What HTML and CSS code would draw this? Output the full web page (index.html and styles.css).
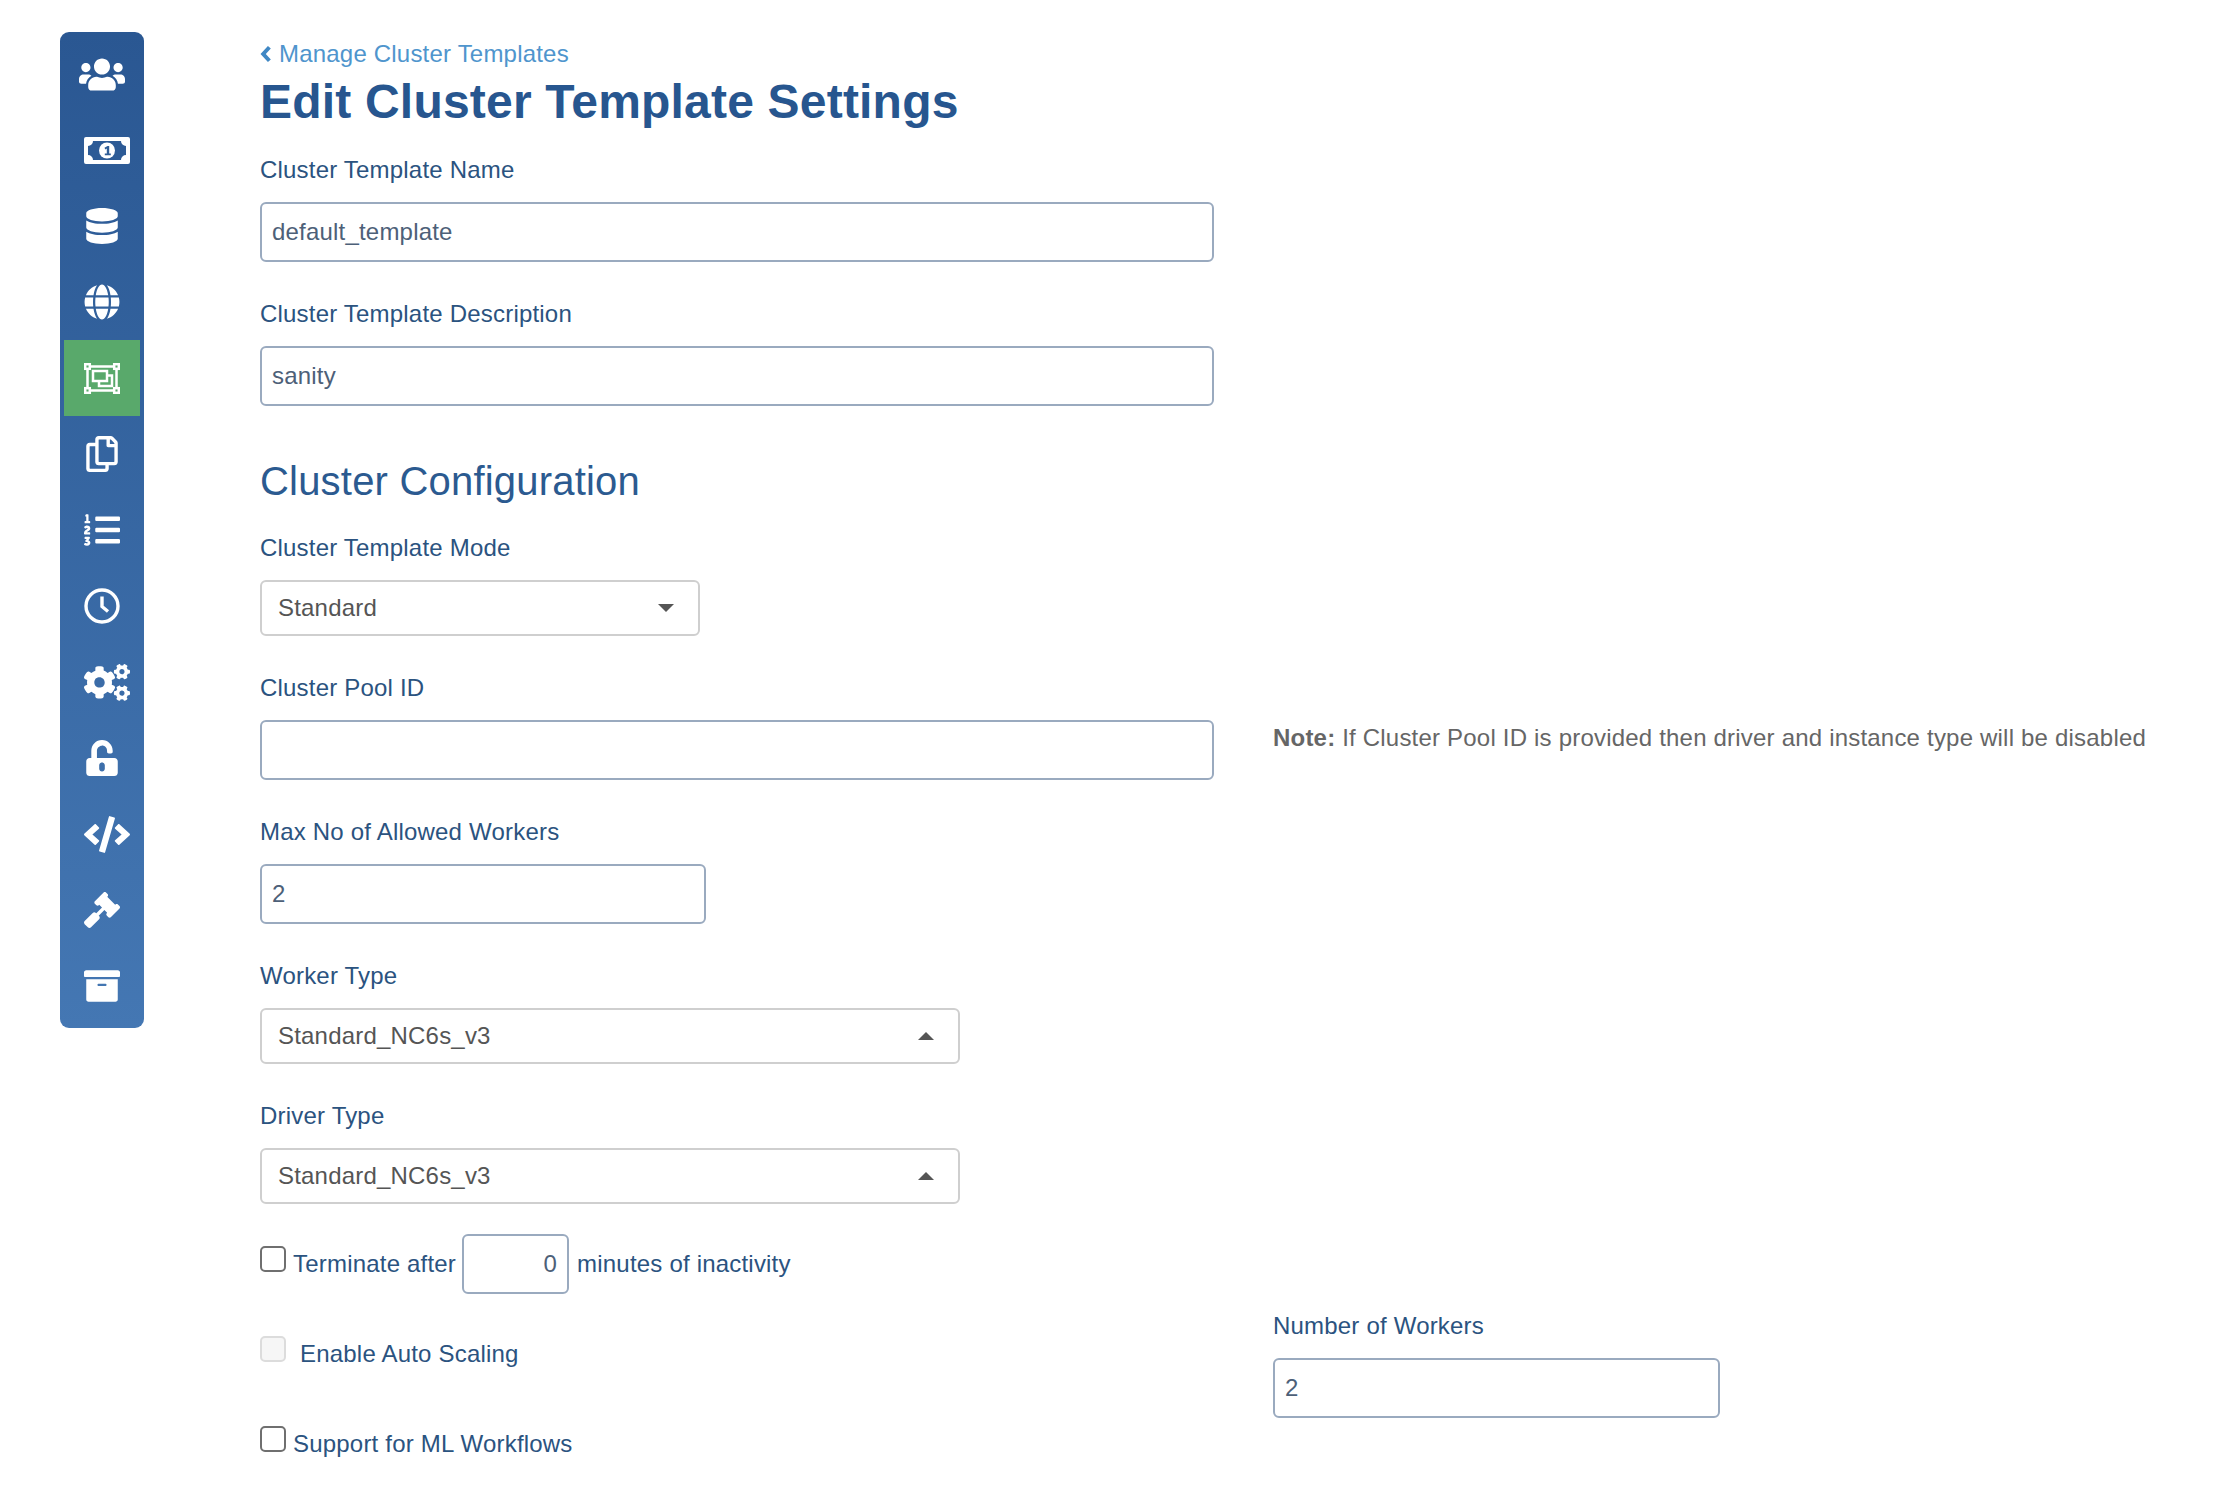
FILE: index.html
```html
<!DOCTYPE html>
<html lang="en">
<head>
<meta charset="utf-8">
<title>Edit Cluster Template Settings</title>
<link rel="stylesheet" href="styles.css">
</head>
<body>
<div class="app">
  <nav class="sidebar">
    <a class="nav-item"><svg class="ico-users" viewBox="0 0 640 512"><path d="M96 224c35.300 0 64-28.700 64-64s-28.700-64-64-64-64 28.700-64 64 28.700 64 64 64zm448 0c35.300 0 64-28.700 64-64s-28.700-64-64-64-64 28.700-64 64 28.700 64 64 64zm32 32h-64c-17.600 0-33.500 7.100-45.100 18.600 40.300 22.100 68.900 62 75.100 109.400h66c17.700 0 32-14.300 32-32v-32c0-35.300-28.700-64-64-64zm-256 0c61.900 0 112-50.100 112-112S381.900 32 320 32 208 82.100 208 144s50.100 112 112 112zm76.800 32h-8.300c-20.800 10-43.900 16-68.500 16s-47.600-6-68.500-16h-8.300C179.600 288 128 339.600 128 403.200V432c0 26.500 21.500 48 48 48h288c26.500 0 48-21.500 48-48v-28.800c0-63.600-51.600-115.200-115.200-115.200zm-223.700-13.400C161.500 263.100 145.600 256 128 256H64c-35.300 0-64 28.700-64 64v32c0 17.700 14.300 32 32 32h65.900c6.300-47.400 34.900-87.300 75.200-109.400z"/></svg></a>
    <a class="nav-item"><svg class="ico-bill" viewBox="0 0 46 27"><path fill-rule="evenodd" d="M2 0h42a2 2 0 0 1 2 2v23a2 2 0 0 1-2 2H2a2 2 0 0 1-2-2V2a2 2 0 0 1 2-2zM9 4a5 5 0 0 1-5 5v9a5 5 0 0 1 5 5h28a5 5 0 0 1 5-5V9a5 5 0 0 1-5-5z"/><circle cx="23" cy="13.500" r="8"/><path class="bill-one" d="M20.500 10.800l3-1.800h1.700v7.500h1.600v1.800h-6v-1.800h2V11.500l-1.500.9z"/></svg></a>
    <a class="nav-item"><svg class="ico-s" viewBox="0 0 448 512"><path d="M448 73.143v45.714C448 159.143 347.667 192 224 192S0 159.143 0 118.857V73.143C0 32.857 100.333 0 224 0s224 32.857 224 73.143zM448 176v102.857C448 319.143 347.667 352 224 352S0 319.143 0 278.857V176c48.125 33.143 136.208 48.572 224 48.572S399.874 209.143 448 176zm0 160v102.857C448 479.143 347.667 512 224 512S0 479.143 0 438.857V336c48.125 33.143 136.208 48.572 224 48.572S399.874 369.143 448 336z"/></svg></a>
    <a class="nav-item"><svg class="ico-m" viewBox="0 0 496 512"><path d="M336.500 160C322 70.700 287.800 8 248 8s-74 62.700-88.500 152h177zM152 256c0 22.200 1.200 43.500 3.300 64h185.300c2.100-20.500 3.300-41.800 3.300-64s-1.200-43.500-3.300-64H155.300c-2.100 20.500-3.300 41.800-3.300 64zm324.700-96c-28.600-67.900-86.500-120.400-158-141.600 24.400 33.800 41.200 84.700 50 141.600h108zM177.200 18.400C105.800 39.600 47.800 92.100 19.300 160h108c8.700-56.900 25.500-107.800 49.900-141.600zM487.400 192H372.700c2.100 21 3.300 42.500 3.300 64s-1.200 43-3.300 64h114.600c5.500-20.500 8.600-41.800 8.600-64s-3.100-43.500-8.500-64zM120 256c0-21.500 1.200-43 3.300-64H8.600C3.200 212.500 0 233.800 0 256s3.200 43.500 8.600 64h114.600c-2-21-3.200-42.500-3.200-64zm39.500 96c14.500 89.300 48.700 152 88.500 152s74-62.700 88.500-152h-177zm159.300 141.600c71.400-21.200 129.400-73.700 158-141.600h-108c-8.800 56.900-25.600 107.800-50 141.600zM19.300 352c28.600 67.900 86.500 120.400 158 141.600-24.400-33.800-41.200-84.700-50-141.600h-108z"/></svg></a>
    <a class="nav-item nav-active"><svg class="ico-group" viewBox="0 0 36 31"><g class="stroke"><path d="M5.500 3.500h25M5.500 27.500h25M3.500 5.500v20M32.500 5.500v20"/><rect x="1.200" y="1.200" width="4.600" height="4.600"/><rect x="30.200" y="1.200" width="4.600" height="4.600"/><rect x="1.200" y="25.200" width="4.600" height="4.600"/><rect x="30.200" y="25.200" width="4.600" height="4.600"/><path d="M9 8h14v10H9zM15 18v5h13V12.500h-5"/></g></svg></a>
    <a class="nav-item"><svg class="ico-s" viewBox="0 0 448 512"><path d="M433.941 65.941l-51.882-51.882A48 48 0 0 0 348.118 0H176c-26.510 0-48 21.490-48 48v48H48c-26.510 0-48 21.490-48 48v320c0 26.510 21.490 48 48 48h224c26.510 0 48-21.490 48-48v-48h80c26.510 0 48-21.490 48-48V99.882a48 48 0 0 0-14.059-33.941zM266 464H54a6 6 0 0 1-6-6V150a6 6 0 0 1 6-6h74v224c0 26.510 21.490 48 48 48h96v42a6 6 0 0 1-6 6zm128-96H182a6 6 0 0 1-6-6V54a6 6 0 0 1 6-6h106v88c0 13.255 10.745 24 24 24h88v202a6 6 0 0 1-6 6zm6-256h-64V48h9.632c1.591 0 3.117.632 4.243 1.757l48.368 48.368a6 6 0 0 1 1.757 4.243V112z"/></svg></a>
    <a class="nav-item"><svg class="ico-m" viewBox="0 0 512 512"><path d="M61.770 401l17.500-20.150a19.920 19.920 0 0 0 5.070-14.190v-3.310C84.340 356 80.500 352 73 352H16a8 8 0 0 0-8 8v16a8 8 0 0 0 8 8h22.830a157.410 157.410 0 0 0-11 12.310l-5.610 7c-4 5.070-5.250 10.130-2.800 14.880l1.050 1.930c3 5.760 6.290 7.880 12.250 7.880h4.730c10.330 0 15.940 2.440 15.940 9.090 0 4.720-4.200 8.220-14.360 8.220a41.540 41.540 0 0 1-15.470-3.120c-6.490-3.880-11.740-3.500-15.600 3.120l-5.590 9.310c-3.720 6.130-3.190 11.720 2.630 15.940 7.710 4.690 20.380 9.440 37 9.440 34.160 0 48.500-22.750 48.500-44.120-.03-14.380-9.120-29.760-28.730-34.880zM496 224H176a16 16 0 0 0-16 16v32a16 16 0 0 0 16 16h320a16 16 0 0 0 16-16v-32a16 16 0 0 0-16-16zm0-160H176a16 16 0 0 0-16 16v32a16 16 0 0 0 16 16h320a16 16 0 0 0 16-16V80a16 16 0 0 0-16-16zm0 320H176a16 16 0 0 0-16 16v32a16 16 0 0 0 16 16h320a16 16 0 0 0 16-16v-32a16 16 0 0 0-16-16zM16 160h64a8 8 0 0 0 8-8v-16a8 8 0 0 0-8-8H64V40a8 8 0 0 0-8-8H32a8 8 0 0 0-7.140 4.420l-8 16A8 8 0 0 0 24 64h8v64H16a8 8 0 0 0-8 8v16a8 8 0 0 0 8 8zm-3.910 160H80a8 8 0 0 0 8-8v-16a8 8 0 0 0-8-8H41.320c3.290-10.290 48.340-18.680 48.340-56.440 0-29.060-25-39.560-44.470-39.560-21.360 0-33.800 10-40.460 18.750-4.370 5.590-3 10.840 2.800 15.370l8.580 6.880c5.610 4.560 11 2.470 16.120-2.440a13.440 13.440 0 0 1 9.460-3.840c3.330 0 9.280 1.560 9.280 8.750C51 248.190 0 257.310 0 304.590v4C0 316 5.080 320 12.090 320z"/></svg></a>
    <a class="nav-item"><svg class="ico-m" viewBox="0 0 36 36"><g class="stroke"><circle class="thick" cx="18" cy="18" r="16"/><path class="thick" d="M18 8.500v10l6 5"/></g></svg></a>
    <a class="nav-item"><svg class="ico-wide" viewBox="0 0 640 512"><path d="M512.100 191l-8.200 14.300c-3 5.300-9.400 7.500-15.100 5.400-11.800-4.400-22.600-10.700-32.100-18.600-4.600-3.800-5.800-10.500-2.800-15.700l8.200-14.300c-6.900-8-12.300-17.300-15.900-27.400h-16.500c-6 0-11.200-4.300-12.200-10.300-2-12-2.100-24.600 0-37.100 1-6 6.200-10.400 12.200-10.400h16.500c3.600-10.100 9-19.400 15.900-27.400l-8.200-14.300c-3-5.200-1.900-11.900 2.800-15.700 9.500-7.900 20.400-14.200 32.100-18.600 5.700-2.100 12.100.1 15.100 5.400l8.200 14.300c10.500-1.900 21.200-1.900 31.700 0L552 6.300c3-5.300 9.400-7.500 15.100-5.400 11.800 4.400 22.600 10.700 32.100 18.600 4.600 3.800 5.800 10.500 2.800 15.700l-8.200 14.300c6.900 8 12.300 17.300 15.900 27.400h16.500c6 0 11.200 4.300 12.200 10.300 2 12 2.100 24.600 0 37.100-1 6-6.200 10.400-12.200 10.400h-16.500c-3.600 10.100-9 19.400-15.900 27.400l8.200 14.300c3 5.200 1.900 11.900-2.800 15.700-9.500 7.900-20.400 14.200-32.100 18.600-5.700 2.100-12.100-.1-15.100-5.400l-8.200-14.300c-10.400 1.900-21.200 1.900-31.700 0zm-10.500-58.800c38.500 29.600 82.400-14.300 52.800-52.800-38.500-29.700-82.400 14.300-52.800 52.800zM386.300 286.100l33.700 16.800c10.100 5.800 14.500 18.100 10.500 29.100-8.900 24.200-26.400 46.400-42.600 65.800-7.400 8.900-20.200 11.100-30.300 5.300l-29.100-16.800c-16 13.700-34.600 24.600-54.900 31.700v33.600c0 11.600-8.300 21.600-19.700 23.600-24.600 4.200-50.400 4.400-75.900 0-11.500-2-20-11.900-20-23.600V418c-20.300-7.200-38.900-18-54.900-31.700L74 403c-10 5.800-22.900 3.600-30.300-5.300-16.200-19.400-33.300-41.600-42.200-65.700-4-10.900.4-23.200 10.500-29.100l33.300-16.800c-3.900-20.900-3.900-42.400 0-63.400L12 205.800c-10.100-5.800-14.600-18.100-10.500-29 8.900-24.200 26-46.400 42.200-65.800 7.400-8.900 20.200-11.100 30.300-5.300l29.100 16.800c16-13.700 34.600-24.600 54.900-31.700V57.100c0-11.500 8.200-21.500 19.600-23.500 24.600-4.200 50.500-4.400 76-.1 11.500 2 20 11.900 20 23.600v33.600c20.300 7.200 38.900 18 54.900 31.700l29.100-16.800c10-5.800 22.900-3.600 30.300 5.300 16.200 19.400 33.200 41.600 42.100 65.800 4 10.900.1 23.200-10 29.100l-33.700 16.800c3.900 21 3.900 42.500 0 63.500zm-117.600 21.100c59.200-77-28.700-164.900-105.700-105.700-59.200 77 28.700 164.900 105.700 105.700zm243.400 182.700l-8.200 14.300c-3 5.300-9.400 7.500-15.100 5.400-11.800-4.400-22.600-10.700-32.100-18.600-4.600-3.800-5.800-10.500-2.800-15.700l8.200-14.300c-6.900-8-12.300-17.300-15.900-27.400h-16.500c-6 0-11.200-4.300-12.200-10.300-2-12-2.100-24.600 0-37.100 1-6 6.200-10.400 12.200-10.400h16.500c3.600-10.100 9-19.400 15.900-27.400l-8.200-14.300c-3-5.200-1.900-11.900 2.800-15.700 9.500-7.900 20.400-14.200 32.100-18.600 5.700-2.100 12.100.1 15.100 5.400l8.200 14.300c10.500-1.900 21.200-1.900 31.700 0l8.200-14.300c3-5.300 9.400-7.500 15.100-5.400 11.800 4.400 22.600 10.700 32.100 18.600 4.600 3.800 5.800 10.500 2.800 15.700l-8.200 14.300c6.900 8 12.300 17.300 15.900 27.400h16.500c6 0 11.200 4.300 12.200 10.300 2 12 2.100 24.600 0 37.100-1 6-6.200 10.400-12.200 10.400h-16.500c-3.600 10.100-9 19.400-15.900 27.400l8.200 14.300c3 5.200 1.900 11.900-2.800 15.700-9.500 7.900-20.400 14.200-32.100 18.600-5.700 2.100-12.100-.1-15.100-5.400l-8.200-14.300c-10.400 1.900-21.200 1.900-31.700 0zM501.600 431c38.500 29.600 82.400-14.300 52.800-52.800-38.500-29.600-82.400 14.300-52.800 52.800z"/></svg></a>
    <a class="nav-item"><svg class="ico-s" viewBox="0 0 448 512"><path d="M400 256H152V152.900c0-39.600 31.700-72.500 71.300-72.900 40-.4 72.700 32.100 72.700 72v16c0 13.300 10.700 24 24 24h32c13.300 0 24-10.700 24-24v-16C376 68 307.500-.3 223.500 0 139.500.3 72 69.500 72 153.500V256H48c-26.500 0-48 21.500-48 48v160c0 26.500 21.500 48 48 48h352c26.500 0 48-21.500 48-48V304c0-26.500-21.500-48-48-48zM264 408c0 22.100-17.900 40-40 40s-40-17.900-40-40v-48c0-22.100 17.900-40 40-40s40 17.900 40 40v48z"/></svg></a>
    <a class="nav-item"><svg class="ico-wide" viewBox="0 0 640 512"><path d="M278.900 511.500l-61-17.700c-6.400-1.800-10-8.500-8.200-14.900L346.200 8.700c1.800-6.400 8.500-10 14.900-8.200l61 17.700c6.400 1.800 10 8.500 8.200 14.900L293.800 503.300c-1.900 6.400-8.500 10.100-14.900 8.200zm-114-112.200l43.500-46.400c4.600-4.900 4.300-12.700-.8-17.200L117 256l90.600-79.700c5.100-4.500 5.500-12.300.8-17.200l-43.500-46.400c-4.500-4.800-12.100-5.100-17-.5L3.800 247.200c-5.100 4.700-5.100 12.800 0 17.500l144.100 135.100c4.900 4.600 12.500 4.400 17-.5zm327.200.6l144.100-135.100c5.100-4.700 5.100-12.800 0-17.500L492.100 112.100c-4.800-4.500-12.400-4.300-17 .5L431.600 159c-4.600 4.900-4.300 12.700.8 17.200L523 256l-90.600 79.700c-5.100 4.500-5.500 12.300-.8 17.200l43.500 46.400c4.500 4.900 12.100 5.100 17 .6z"/></svg></a>
    <a class="nav-item"><svg class="ico-m" viewBox="0 0 512 512"><path d="M504.971 199.362l-22.627-22.627c-9.373-9.373-24.569-9.373-33.941 0l-5.657 5.657L329.608 69.255l5.657-5.657c9.373-9.373 9.373-24.569 0-33.941L312.638 7.029c-9.373-9.373-24.569-9.373-33.941 0L154.246 131.480c-9.373 9.373-9.373 24.569 0 33.941l22.627 22.627c9.373 9.373 24.569 9.373 33.941 0l5.657-5.657 39.598 39.598-81.040 81.040-5.657-5.657c-12.497-12.497-32.758-12.497-45.255 0L9.373 412.118c-12.497 12.497-12.497 32.758 0 45.255l45.255 45.255c12.497 12.497 32.758 12.497 45.254 0l114.745-114.745c12.497-12.497 12.497-32.758 0-45.255l-5.657-5.657 81.040-81.040 39.598 39.598-5.657 5.657c-9.373 9.373-9.373 24.569 0 33.941l22.627 22.627c9.373 9.373 24.569 9.373 33.941 0l124.451-124.451c9.372-9.372 9.372-24.568 0-33.941z"/></svg></a>
    <a class="nav-item"><svg class="ico-m" viewBox="0 0 512 512"><path d="M32 448c0 17.700 14.300 32 32 32h384c17.700 0 32-14.300 32-32V160H32v288zm160-212c0-6.600 5.400-12 12-12h104c6.600 0 12 5.400 12 12v8c0 6.600-5.400 12-12 12H204c-6.600 0-12-5.400-12-12v-8zM480 32H32C14.300 32 0 46.300 0 64v48c0 8.800 7.200 16 16 16h480c8.800 0 16-7.200 16-16V64c0-17.700-14.300-32-32-32z"/></svg></a>
  </nav>

  <main class="content">
    <a class="back-link"><svg class="chev" viewBox="0 0 10 16"><path d="M8 2L2.500 8 8 14"/></svg>Manage Cluster Templates</a>
    <h1 class="title">Edit Cluster Template Settings</h1>

    <div class="field">
      <label class="label">Cluster Template Name</label>
      <input class="input w-full" value="default_template">
    </div>
    <div class="field">
      <label class="label">Cluster Template Description</label>
      <input class="input w-full" value="sanity">
    </div>

    <h2 class="subtitle">Cluster Configuration</h2>

    <div class="field">
      <label class="label">Cluster Template Mode</label>
      <div class="select w-small"><span>Standard</span><i class="caret"></i></div>
    </div>
    <div class="field pool-row">
      <div class="col-left">
        <label class="label">Cluster Pool ID</label>
        <input class="input w-full">
      </div>
      <p class="note"><strong>Note:</strong> If Cluster Pool ID is provided then driver and instance type will be disabled</p>
    </div>
    <div class="field">
      <label class="label">Max No of Allowed Workers</label>
      <input class="input w-max" value="2">
    </div>
    <div class="field">
      <label class="label">Worker Type</label>
      <div class="select w-mid"><span>Standard_NC6s_v3</span><i class="caret up"></i></div>
    </div>
    <div class="field">
      <label class="label">Driver Type</label>
      <div class="select w-mid"><span>Standard_NC6s_v3</span><i class="caret up"></i></div>
    </div>

    <div class="bottom">
      <div class="col-left">
        <div class="check-row">
          <input type="checkbox" class="check">
          <span class="check-text">Terminate after</span>
          <input class="input mini" value="0">
          <span class="check-text">minutes of inactivity</span>
        </div>
        <div class="check-row">
          <input type="checkbox" class="check" disabled>
          <span class="check-text wide">Enable Auto Scaling</span>
        </div>
        <div class="check-row last">
          <input type="checkbox" class="check">
          <span class="check-text">Support for ML Workflows</span>
        </div>
      </div>
      <div class="workers">
        <label class="label">Number of Workers</label>
        <input class="input w-num" value="2">
      </div>
    </div>
  </main>
</div>
</body>
</html>
```

FILE: styles.css
```css
* { box-sizing: border-box; }
html, body { margin: 0; padding: 0; background: #fff; }
body {
  font-family: "Liberation Sans", Arial, sans-serif;
  font-size: 24px;
  letter-spacing: .2px;
  color: #2b5380;
}
.app { display: flex; align-items: flex-start; }

.sidebar {
  margin: 32px 0 0 60px;
  width: 84px;
  height: 996px;
  padding: 4px 4px 0;
  border-radius: 9px;
  background: linear-gradient(180deg, #2a5792 0%, #4477b3 100%);
  flex: none;
}
.nav-item {
  display: flex;
  align-items: center;
  justify-content: center;
  height: 76px;
}
.nav-item svg { display: block; fill: #fff; flex: none; }
.nav-active { background: #59a96b; }
.ico-users { width: 46px; height: 37px; }
.ico-bill { width: 46px; height: 27px; margin-left: 10px; }
.ico-s { width: 32px; height: 36px; }
.ico-m { width: 36px; height: 36px; }
.ico-wide { width: 46px; height: 37px; margin-left: 10px; }
.ico-group { width: 36px; height: 31px; }
.bill-one { fill: #2f5d97; }
.nav-item .stroke { fill: none; stroke: #fff; stroke-width: 2.5; }
.nav-item .thick { stroke-width: 3.4; }

.content { margin-left: 116px; padding-top: 40px; flex: none; width: 1900px; }
.back-link {
  display: flex;
  align-items: center;
  height: 28px;
  color: #4f95cd;
  font-size: 24px;
  line-height: 28px;
}
.chev { width: 12px; height: 18px; margin-right: 7px; fill: none; stroke: #3f87c4; stroke-width: 3.5; }
.title {
  margin: 6px 0 26px;
  height: 56px;
  color: #27568f;
  font-size: 48px;
  line-height: 56px;
  font-weight: 700;
}
.subtitle {
  margin: 52px 0 30px;
  height: 46px;
  color: #2b5a90;
  font-size: 40px;
  line-height: 46px;
  font-weight: 400;
}
.field { margin-bottom: 38px; }
.label { display: block; height: 28px; margin-bottom: 18px; line-height: 28px; color: #2b5380; }
.input {
  display: block;
  height: 60px;
  padding: 0 10px;
  border: 2px solid #9aaabf;
  border-radius: 6px;
  background: #fff;
  color: #4d6078;
  font: 24px "Liberation Sans", Arial, sans-serif;
  letter-spacing: .2px;
  outline: none;
}
.w-full { width: 954px; }
.w-num { width: 447px; }
.w-max { width: 446px; }
.select {
  display: flex;
  align-items: center;
  justify-content: space-between;
  height: 56px;
  padding: 0 24px 0 16px;
  border: 2px solid #cfcfcf;
  border-radius: 6px;
  color: #555;
}
.w-small { width: 440px; }
.w-mid { width: 700px; }
.caret {
  width: 0;
  height: 0;
  border-left: 8px solid transparent;
  border-right: 8px solid transparent;
  border-top: 8px solid #555;
}
.caret.up { border-top: 0; border-bottom: 8px solid #555; }

.pool-row { display: flex; align-items: flex-end; gap: 59px; }
.note { margin: 0 0 28px; color: #666; line-height: 28px; white-space: nowrap; }
.note strong { color: #666; }

.bottom { display: flex; gap: 59px; margin-top: -8px; }
.col-left { width: 954px; flex: none; }
.check-row { display: flex; align-items: center; height: 60px; margin-bottom: 30px; }
.check-row.last { margin-bottom: 0; }
.check {
  appearance: none;
  width: 26px;
  height: 26px;
  margin: 0 7px 10px 0;
  border: 2px solid #6f6f6f;
  border-radius: 5px;
  background: #fff;
  flex: none;
}
.check:disabled { border-color: #dcdcdc; background: #f6f6f6; }
.check-text.wide { margin-left: 7px; }
.mini { width: 107px; margin: 0 8px 0 6px; text-align: right; }
.workers { padding-top: 78px; }
```
